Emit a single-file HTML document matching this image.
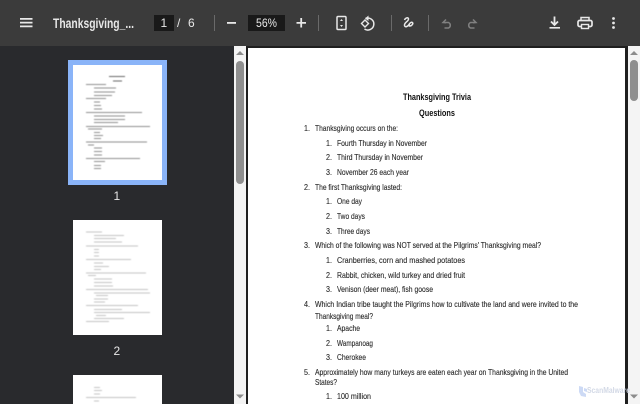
<!DOCTYPE html>
<html><head><meta charset="utf-8"><style>
html,body{margin:0;padding:0;width:640px;height:404px;overflow:hidden;background:#292a2d}
svg{display:block;position:absolute;left:0;top:0;filter:blur(.3px)}
.d{font-family:"Liberation Sans",sans-serif;font-size:8.4px;fill:#2a2a2a;stroke:#2a2a2a;stroke-width:.12px}
.b{font-weight:bold;fill:#111;stroke:none;font-size:9px}
.t{font-family:"Liberation Sans",sans-serif;fill:#e8e8e8}
</style></head><body>
<svg width="640" height="404" viewBox="0 0 640 404" xmlns="http://www.w3.org/2000/svg">
<defs><filter id="s" x="-5%" y="-5%" width="110%" height="110%"><feGaussianBlur stdDeviation=".45"/></filter></defs>
<rect width="640" height="404" fill="#292a2d"/>
<!-- toolbar -->
<rect width="640" height="46" fill="#3b3b3b"/>
<path d="M20 18h12.500v1.800H20zM20 21.700h12.500v1.800H20zM20 25.500h12.500v1.800H20z" fill="#e8e8e8"/>
<text class="t" x="53" y="28" font-size="14" font-weight="bold" textLength="81" lengthAdjust="spacingAndGlyphs">Thanksgiving_...</text>
<rect x="154" y="15" width="20" height="16" fill="#191919"/>
<text class="t" x="160.500" y="27" font-size="12" textLength="6.500">1</text>
<text class="t" x="177" y="27" font-size="12">/</text>
<text class="t" x="188" y="27" font-size="12">6</text>
<rect x="214" y="15" width="1" height="16" fill="#6a6a6a"/>
<rect x="227" y="22" width="9" height="1.800" fill="#e8e8e8"/>
<rect x="248" y="15" width="37" height="16" fill="#191919"/>
<text class="t" x="256" y="27" font-size="12" textLength="21" lengthAdjust="spacingAndGlyphs">56%</text>
<path d="M296.500 22h9.500v1.800h-9.500zM300.300 18h1.800v9.500h-1.800z" fill="#e8e8e8"/>
<rect x="318" y="15" width="1" height="16" fill="#6a6a6a"/>
<!-- fit -->
<rect x="337" y="16.500" width="9" height="13" rx="1" fill="none" stroke="#e8e8e8" stroke-width="1.500"/>
<path d="M341.500 19l-1.500 2h3zM341.500 27l-1.500-2h3z" fill="#e8e8e8"/>
<!-- rotate -->
<path d="M365.500 18.500a6 6 0 1 1-1 10.500" fill="none" stroke="#e8e8e8" stroke-width="1.500"/>
<path d="M368.500 15.500l-3.500 3 3.500 2.500z" fill="#e8e8e8"/>
<path d="M361.500 23.500l3.500-3.500 3.500 3.500-3.500 3.500z" fill="none" stroke="#e8e8e8" stroke-width="1.400"/>
<rect x="391" y="15" width="1" height="16" fill="#6a6a6a"/>
<!-- draw -->
<path d="M404.500 20c1-2.500 4-3 4-1 0 2.500-4.500 3.500-4 6.500.4 2.300 3.500 1 4.500-1 .8-1.600 2.500-2.800 3.500-1.800 1 1-.8 3.300-2.500 3.300-1 0-1-1 0-1.500" fill="none" stroke="#e8e8e8" stroke-width="1.500"/>
<rect x="428" y="15" width="1" height="16" fill="#6a6a6a"/>
<!-- undo/redo -->
<path d="M446 19.500l-3 3 3 .3M443.500 22.500h5a3 3 0 0 1 0 5.500h-4" fill="none" stroke="#808080" stroke-width="1.500"/>
<path d="M473 19.500l3 3-3 .3M475.500 22.500h-5a3 3 0 0 0 0 5.500h4" fill="none" stroke="#808080" stroke-width="1.500"/>
<!-- download -->
<path d="M554.500 16.500v8M551 21.500l3.500 3.500 3.500-3.500" fill="none" stroke="#e8e8e8" stroke-width="1.800"/>
<rect x="549.500" y="27" width="10.500" height="1.600" fill="#e8e8e8"/>
<!-- print -->
<path d="M581 21v-3.500h8V21" fill="none" stroke="#e8e8e8" stroke-width="1.500"/>
<rect x="578" y="20.500" width="14" height="6" rx="1.500" fill="none" stroke="#e8e8e8" stroke-width="1.700"/>
<rect x="581.500" y="24.500" width="7" height="4" fill="#3b3b3b" stroke="#e8e8e8" stroke-width="1.400"/>
<!-- dots -->
<circle cx="613.500" cy="18.500" r="1.400" fill="#e8e8e8"/><circle cx="613.500" cy="23" r="1.400" fill="#e8e8e8"/><circle cx="613.500" cy="27.500" r="1.400" fill="#e8e8e8"/>

<!-- thumbnails -->
<rect x="68" y="60" width="99" height="125" fill="#8ab4f8"/>
<rect x="73" y="65" width="89" height="115" fill="#fff"/>
<g fill="#8e8e8e" filter="url(#s)">
<rect x="109" y="76" width="16" height="1" fill="#666"/><rect x="113" y="80.500" width="9" height="1" fill="#666"/>
<rect x="86" y="84" width="20" height="1"/><rect x="94" y="87.500" width="22" height="1"/><rect x="94" y="91.500" width="21" height="1"/><rect x="94" y="95" width="18" height="1"/>
<rect x="86" y="98" width="20" height="1"/><rect x="94" y="101.500" width="6" height="1"/><rect x="94" y="105" width="7" height="1"/><rect x="94" y="108.500" width="8" height="1"/>
<rect x="86" y="112" width="56" height="1"/><rect x="94" y="115.500" width="31" height="1"/><rect x="94" y="119" width="31" height="1"/><rect x="94" y="122" width="24" height="1"/>
<rect x="86" y="126" width="64" height="1"/><rect x="88" y="128.500" width="14" height="1"/><rect x="94" y="132" width="6" height="1"/><rect x="94" y="135" width="9" height="1"/><rect x="94" y="138" width="7" height="1"/>
<rect x="86" y="141.500" width="61" height="1"/><rect x="88" y="144.500" width="6" height="1"/><rect x="94" y="147.500" width="8" height="1"/><rect x="94" y="151" width="8" height="1"/><rect x="94" y="154.500" width="8" height="1"/>
<rect x="86" y="158" width="54" height="1"/><rect x="94" y="161" width="11" height="1"/><rect x="94" y="165" width="7" height="1"/><rect x="94" y="168" width="7" height="1"/>
</g>
<text class="t" x="113.500" y="200" font-size="12">1</text>
<rect x="73" y="220" width="89" height="115" fill="#fff"/>
<g fill="#c4c4c4" filter="url(#s)">
<rect x="86" y="231.500" width="16" height="1"/><rect x="94" y="235" width="30" height="1"/><rect x="94" y="238" width="22" height="1"/><rect x="94" y="241.500" width="28" height="1"/>
<rect x="86" y="245.500" width="52" height="1"/><rect x="94" y="249" width="5" height="1"/><rect x="94" y="252" width="5" height="1"/><rect x="94" y="255.500" width="5" height="1"/>
<rect x="86" y="259" width="45" height="1"/><rect x="94" y="262.500" width="9" height="1"/><rect x="94" y="266" width="15" height="1"/><rect x="94" y="269" width="7" height="1"/>
<rect x="86" y="272.500" width="60" height="1"/><rect x="88" y="275" width="8" height="1"/><rect x="94" y="278.500" width="18" height="1"/><rect x="94" y="282" width="18" height="1"/><rect x="94" y="285.500" width="19" height="1"/>
<rect x="86" y="289" width="62" height="1"/><rect x="94" y="292.500" width="56" height="1"/><rect x="96" y="295" width="12" height="1"/><rect x="94" y="298.500" width="14" height="1"/><rect x="94" y="301.500" width="11" height="1"/>
<rect x="86" y="305" width="52" height="1"/><rect x="94" y="309" width="28" height="1"/><rect x="94" y="312" width="56" height="1"/><rect x="96" y="315" width="10" height="1"/><rect x="94" y="318" width="30" height="1"/>
<rect x="86" y="321" width="23" height="1"/>
</g>
<text class="t" x="113.500" y="355" font-size="12">2</text>
<rect x="73" y="375" width="89" height="29" fill="#fff"/>
<g fill="#c4c4c4" filter="url(#s)"><rect x="94" y="387" width="6" height="1"/><rect x="94" y="390" width="8" height="1"/><rect x="94" y="393.500" width="6" height="1"/><rect x="86" y="397" width="50" height="1"/><rect x="94" y="400.500" width="5" height="1"/></g>

<!-- left scrollbar -->
<rect x="234" y="46" width="12" height="358" fill="#f4f4f4"/>
<path d="M236 55l4-4 4 4z" fill="#8c8c8c"/>
<path d="M236 394.500h8l-4 4z" fill="#8c8c8c"/>
<rect x="236" y="61" width="8" height="123" rx="4" fill="#8f8f8f"/>
<!-- viewer -->
<rect x="246" y="46" width="382" height="358" fill="#1f1f1f"/>
<rect x="248" y="48" width="377" height="356" fill="#fff"/>
<!-- right scrollbar -->
<rect x="628" y="46" width="12" height="358" fill="#f4f4f4"/>
<path d="M630 55l4-4 4 4z" fill="#8c8c8c"/>
<path d="M630 394.500h8l-4 4z" fill="#8c8c8c"/>
<rect x="630" y="60" width="8" height="41" rx="4" fill="#8f8f8f"/>

<!-- document -->
<text class="d b" x="403" y="100" textLength="68" lengthAdjust="spacingAndGlyphs">Thanksgiving Trivia</text>
<text class="d b" x="419" y="116" textLength="36" lengthAdjust="spacingAndGlyphs">Questions</text>
<g>
<text class="d" x="304" y="131" textLength="6" lengthAdjust="spacingAndGlyphs">1.</text><text class="d" x="315" y="131" textLength="83" lengthAdjust="spacingAndGlyphs">Thanksgiving occurs on the:</text>
<text class="d" x="326" y="146" textLength="6" lengthAdjust="spacingAndGlyphs">1.</text><text class="d" x="337" y="146" textLength="90" lengthAdjust="spacingAndGlyphs">Fourth Thursday in November</text>
<text class="d" x="326" y="160" textLength="6" lengthAdjust="spacingAndGlyphs">2.</text><text class="d" x="337" y="160" textLength="86" lengthAdjust="spacingAndGlyphs">Third Thursday in November</text>
<text class="d" x="326" y="175" textLength="6" lengthAdjust="spacingAndGlyphs">3.</text><text class="d" x="337" y="175" textLength="72" lengthAdjust="spacingAndGlyphs">November 26 each year</text>
<text class="d" x="304" y="190" textLength="6" lengthAdjust="spacingAndGlyphs">2.</text><text class="d" x="315" y="190" textLength="87" lengthAdjust="spacingAndGlyphs">The first Thanksgiving lasted:</text>
<text class="d" x="326" y="204" textLength="6" lengthAdjust="spacingAndGlyphs">1.</text><text class="d" x="337" y="204" textLength="25" lengthAdjust="spacingAndGlyphs">One day</text>
<text class="d" x="326" y="219" textLength="6" lengthAdjust="spacingAndGlyphs">2.</text><text class="d" x="337" y="219" textLength="28" lengthAdjust="spacingAndGlyphs">Two days</text>
<text class="d" x="326" y="234" textLength="6" lengthAdjust="spacingAndGlyphs">3.</text><text class="d" x="337" y="234" textLength="33" lengthAdjust="spacingAndGlyphs">Three days</text>
<text class="d" x="304" y="248" textLength="6" lengthAdjust="spacingAndGlyphs">3.</text><text class="d" x="315" y="248" textLength="226" lengthAdjust="spacingAndGlyphs">Which of the following was NOT served at the Pilgrims' Thanksgiving meal?</text>
<text class="d" x="326" y="263" textLength="6" lengthAdjust="spacingAndGlyphs">1.</text><text class="d" x="337" y="263" textLength="128" lengthAdjust="spacingAndGlyphs">Cranberries, corn and mashed potatoes</text>
<text class="d" x="326" y="278" textLength="6" lengthAdjust="spacingAndGlyphs">2.</text><text class="d" x="337" y="278" textLength="128" lengthAdjust="spacingAndGlyphs">Rabbit, chicken, wild turkey and dried fruit</text>
<text class="d" x="326" y="292" textLength="6" lengthAdjust="spacingAndGlyphs">3.</text><text class="d" x="337" y="292" textLength="96" lengthAdjust="spacingAndGlyphs">Venison (deer meat), fish goose</text>
<text class="d" x="304" y="307" textLength="6" lengthAdjust="spacingAndGlyphs">4.</text><text class="d" x="315" y="307" textLength="263" lengthAdjust="spacingAndGlyphs">Which Indian tribe taught the Pilgrims how to cultivate the land and were invited to the</text>
<text class="d" x="315" y="319" textLength="58" lengthAdjust="spacingAndGlyphs">Thanksgiving meal?</text>
<text class="d" x="326" y="331" textLength="6" lengthAdjust="spacingAndGlyphs">1.</text><text class="d" x="337" y="331" textLength="23" lengthAdjust="spacingAndGlyphs">Apache</text>
<text class="d" x="326" y="346" textLength="6" lengthAdjust="spacingAndGlyphs">2.</text><text class="d" x="337" y="346" textLength="36" lengthAdjust="spacingAndGlyphs">Wampanoag</text>
<text class="d" x="326" y="360" textLength="6" lengthAdjust="spacingAndGlyphs">3.</text><text class="d" x="337" y="360" textLength="29" lengthAdjust="spacingAndGlyphs">Cherokee</text>
<text class="d" x="304" y="375" textLength="6" lengthAdjust="spacingAndGlyphs">5.</text><text class="d" x="315" y="375" textLength="253" lengthAdjust="spacingAndGlyphs">Approximately how many turkeys are eaten each year on Thanksgiving in the United</text>
<text class="d" x="315" y="385" textLength="22" lengthAdjust="spacingAndGlyphs">States?</text>
<text class="d" x="326" y="399" textLength="6" lengthAdjust="spacingAndGlyphs">1.</text><text class="d" x="337" y="399" textLength="34" lengthAdjust="spacingAndGlyphs">100 million</text>
</g>
<!-- watermark -->
<path d="M579 386l4 1v5l3 2v3l-5-1-2-4zM584 388l3 1v3l-3-1z" fill="#cddaf5"/>
<text x="587" y="393" font-family="Liberation Sans,sans-serif" font-size="8" font-weight="bold" fill="#d3d9e6" textLength="43" lengthAdjust="spacingAndGlyphs">ScanMalware</text>
</svg>
</body></html>
